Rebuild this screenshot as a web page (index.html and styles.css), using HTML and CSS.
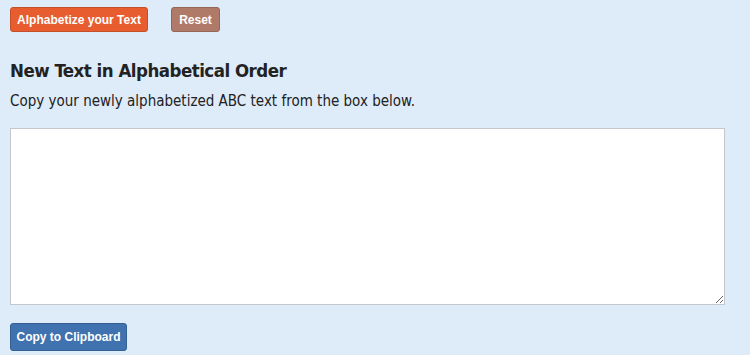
FILE: index.html
```html
<!DOCTYPE html>
<html>
<head>
<meta charset="utf-8">
<link rel="stylesheet" href="styles.css">
</head>
<body>
<div class="page">
  <div class="actions">
    <button class="btn btn-orange">Alphabetize your Text</button>
    <button class="btn btn-brown">Reset</button>
  </div>
  <h2 class="title">New Text in Alphabetical Order</h2>
  <p class="desc">Copy your newly alphabetized ABC text from the box below.</p>
  <textarea class="output"></textarea>
  <div class="copy-row">
    <button class="btn btn-blue">Copy to Clipboard</button>
  </div>
</div>
</body>
</html>
```
FILE: styles.css
```css
html, body {
  margin: 0;
  padding: 0;
  background: #deebf9;
}
.page {
  padding: 7px 10px 0 10px;
  font-family: "DejaVu Sans Condensed", "DejaVu Sans", sans-serif;
  color: #222;
}
.actions {
  display: flex;
  gap: 23px;
}
.btn {
  font-family: "Liberation Sans", Arial, sans-serif;
  font-weight: bold;
  font-size: 12px;
  color: #fff;
  border-radius: 3px;
  height: 25px;
  padding: 0;
  white-space: nowrap;
  text-align: center;
  cursor: pointer;
}
.btn-orange {
  background: #e85d2f;
  border: 1px solid #c4502a;
  width: 138px;
}
.btn-brown {
  background: #b07a69;
  border: 1px solid #956555;
  width: 49px;
}
.btn-blue {
  background: #3f72ae;
  border: 1px solid #335f93;
  width: 117px;
  height: 28px;
}
.title {
  font-family: "DejaVu Sans Condensed", "DejaVu Sans", sans-serif;
  font-size: 18.5px;
  letter-spacing: -0.5px;
  font-weight: bold;
  margin: 27px 0 0 0;
  line-height: 24px;
}
.desc {
  font-size: 15px;
  margin: 8px 0 0 0;
  line-height: 20px;
}
.output {
  display: block;
  box-sizing: border-box;
  width: 715px;
  height: 177px;
  margin-top: 17px;
  border: 1px solid #c4c8cc;
  background: #fff;
}
.copy-row {
  margin-top: 18px;
}
```
